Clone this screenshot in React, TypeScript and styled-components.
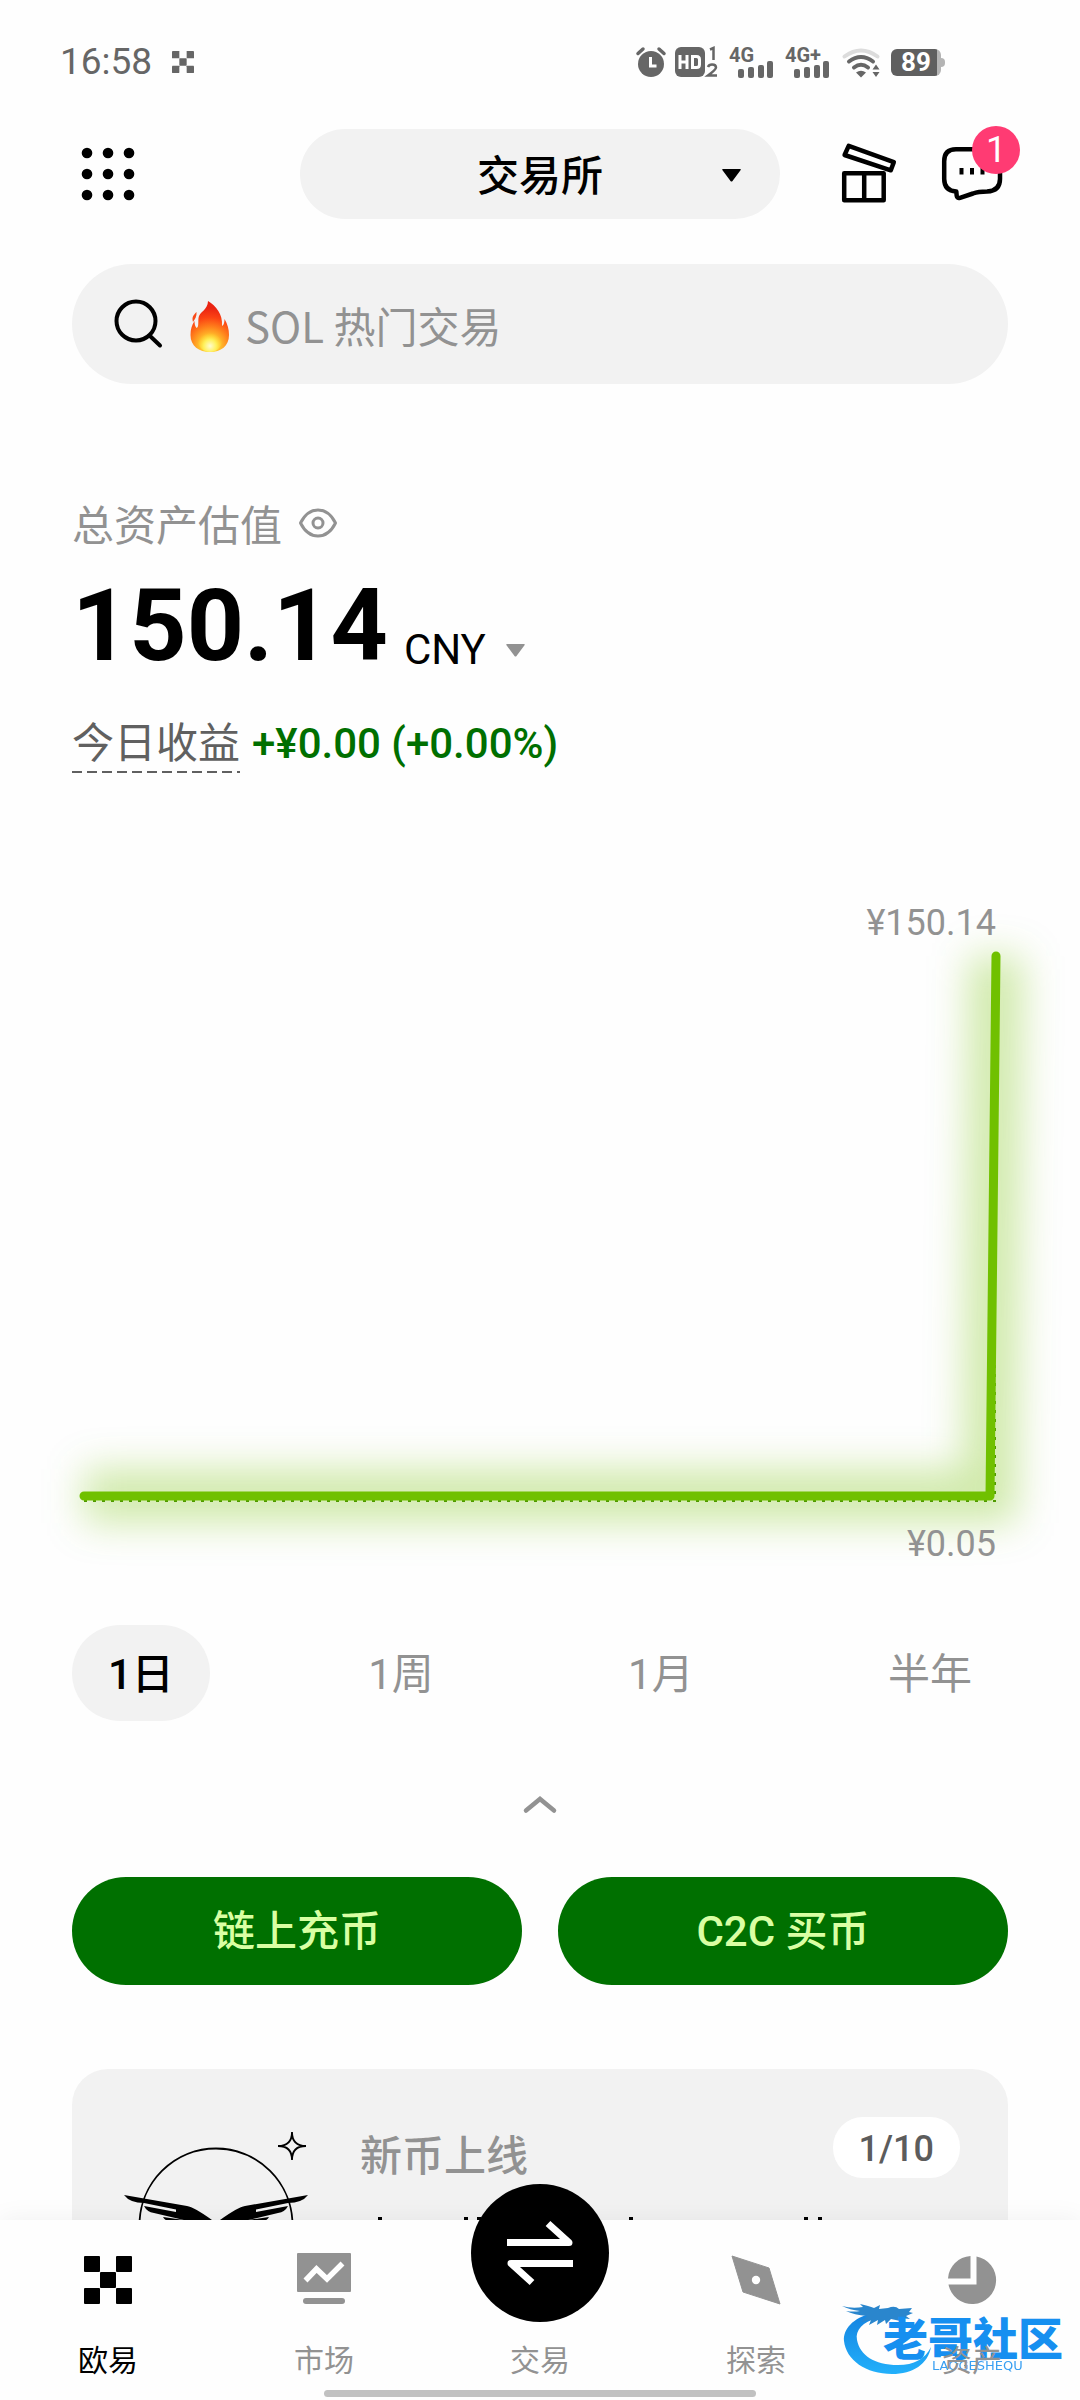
import React, { useState } from "react";
import styled, { createGlobalStyle } from "styled-components";

const numeric = `Roboto, "Noto Sans CJK SC", sans-serif`;

const GlobalStyle = createGlobalStyle`
  *, *::before, *::after { box-sizing: border-box; }
  html, body { margin: 0; background: #fefefe; }
  body, button, input, select {
    font-family: "Noto Sans CJK SC", "Noto Sans", sans-serif;
    color: #000;
  }
  button, input, select { border: 0; padding: 0; margin: 0; background: none; font-size: 42px; }
  button { cursor: pointer; }
  svg { display: block; flex: none; overflow: visible; }
`;

const Screen = styled.div`
  height: 100vh;
  display: flex;
  flex-direction: column;
  overflow: hidden;
  background: #fefefe;
`;

/* ---------- status bar ---------- */

const StatusBar = styled.div`
  display: flex;
  align-items: center;
  justify-content: space-between;
  padding: 38px 135px 43px 60px;
  color: #666;
`;

const StatusGroup = styled.div`
  display: flex;
  align-items: center;
  gap: ${(p: { $gap: number }) => p.$gap}px;
`;

const Clock = styled.time`
  font: 400 37px/48px Roboto, sans-serif;
`;

const Battery = styled.span`
  display: block;
  width: 50px;
  height: 27px;
  margin-right: 4px;
  border-radius: 6px;
  background: linear-gradient(to right, #5f5f5f 46px, #b4b4b4 46px);
  color: #fff;
  font: 700 26px/27px Roboto, sans-serif;
  text-align: center;
  position: relative;
  &::after {
    content: "";
    position: absolute;
    left: 50px;
    top: 9px;
    width: 4px;
    height: 9px;
    border-radius: 0 4px 4px 0;
    background: #b4b4b4;
  }
`;

const CheckerMark = ({ size, color }: { size: number; color: string }) => (
  <svg width={size} height={size} viewBox="0 0 48 48" fill={color} aria-hidden="true">
    <rect width="16" height="16" rx="1" />
    <rect x="32" width="16" height="16" rx="1" />
    <rect x="16" y="16" width="16" height="16" rx="1" />
    <rect y="32" width="16" height="16" rx="1" />
    <rect x="32" y="32" width="16" height="16" rx="1" />
  </svg>
);

const AlarmIcon = () => (
  <svg width="27" height="30" viewBox="0 0 27 30" aria-hidden="true">
    <circle cx="15" cy="17" r="13" fill="#666" />
    <path d="M14.500 10v9h6" fill="none" stroke="#fff" strokeWidth="3" />
    <path d="M2 6.500l5-4.500M28 6.500l-5-4.500" stroke="#666" strokeWidth="3.500" strokeLinecap="round" />
  </svg>
);

const HdIcon = () => (
  <svg width="42" height="30" viewBox="0 0 42 30" aria-hidden="true">
    <rect width="30" height="30" rx="6" fill="#666" />
    <path d="M5 8v14M12 8v14M5 15h7" stroke="#fff" strokeWidth="3" fill="none" />
    <path d="M17.500 9.500h4q3 0 3 3v5q0 3-3 3h-4z" stroke="#fff" strokeWidth="3" fill="none" />
    <path d="M35 2.500l3.500-1.500v12M33 20q1-2.500 4-2.500 4 0 4 3 0 2-8 8h9" fill="none" stroke="#666" strokeWidth="2.500" />
  </svg>
);

const SignalIcon = ({ label }: { label: string }) => (
  <svg width="44" height="30" viewBox="0 0 44 30" fill="#666" role="img" aria-label={label}>
    <text x="0" y="15" fontFamily="Roboto, sans-serif" fontWeight="700" fontSize="20">
      {label}
    </text>
    <rect x="9" y="22" width="6" height="9" rx="2" />
    <rect x="19" y="20" width="6" height="11" rx="2" />
    <rect x="29" y="18" width="6" height="13" rx="2" />
    <rect x="38" y="14" width="6" height="17" rx="2" />
  </svg>
);

const WifiIcon = () => (
  <svg width="38" height="30" viewBox="-2 0 38 30" fill="none" strokeLinecap="round" aria-hidden="true">
    <path d="M1.500 9.500q16.500-12 33 0" stroke="#dcdcdc" strokeWidth="4" />
    <path d="M6 14.500q12-9 24 0" stroke="#666" strokeWidth="4" />
    <path d="M11 20.500q7-5.500 14 0" stroke="#666" strokeWidth="4" />
    <path d="M13 25.500q5-3.500 10 0l-5 5z" fill="#666" />
    <path d="M29.500 22.500l3.500-5 3.500 5zM29.500 25l3.500 5 3.500-5z" fill="#666" />
  </svg>
);

/* ---------- header ---------- */

const Header = styled.header`
  display: grid;
  grid-template-columns: 1fr minmax(0, 480px) 1fr;
  align-items: center;
  padding: 0 72px;
`;

const IconButton = styled.button`
  position: relative;
  width: 72px;
  height: 72px;
`;

const HeaderActions = styled.div`
  display: flex;
  justify-content: flex-end;
  gap: 30px;
`;

const Badge = styled.span`
  position: absolute;
  top: -12px;
  right: -12px;
  width: 48px;
  height: 48px;
  border-radius: 50%;
  background: #ff3b73;
  color: #fff;
  font: 400 36px/48px ${numeric};
  text-align: center;
`;

const ModePicker = styled.label`
  position: relative;
  display: block;
  svg {
    position: absolute;
    right: 39px;
    top: 40px;
    pointer-events: none;
  }
`;

const ModeSelect = styled.select`
  appearance: none;
  width: 100%;
  height: 90px;
  padding-bottom: 4px;
  border-radius: 45px;
  background: #f2f2f2;
  font-weight: 500;
  text-align-last: center;
`;

/* ---------- scrolling content ---------- */

const Content = styled.main`
  flex: 1;
  min-height: 0;
  overflow: hidden auto;
  scrollbar-width: none;
  padding: 45px 72px 0;
`;

const SearchBar = styled.label`
  display: flex;
  align-items: center;
  height: 120px;
  padding: 0 42px;
  gap: 26px;
  border-radius: 60px;
  background: #f2f2f2;
`;

const SearchField = styled.span`
  flex: 1;
  display: flex;
  align-items: center;
  gap: 15px;
`;

const SearchInput = styled.input`
  flex: 1;
  min-width: 0;
  height: 72px;
  outline: 0;
  &::placeholder { color: #929292; opacity: 1; }
`;

const Overview = styled.section`
  padding-top: 109px;
`;

const CaptionRow = styled.div`
  display: flex;
  align-items: center;
  gap: 16px;
  color: #929292;
  font-size: 42px;
  line-height: 60px;
`;

const PlainButton = styled.button`
  display: block;
`;

const BalanceRow = styled.div`
  display: flex;
  align-items: flex-end;
  gap: 16px;
  margin-top: 23px;
`;

const Balance = styled.strong`
  font: 700 100px/100px ${numeric};
`;

const CurrencyPicker = styled.label`
  display: flex;
  align-items: center;
  gap: 20px;
`;

const CurrencySelect = styled.select`
  appearance: none;
  height: 52px;
  font: 400 42px/52px ${numeric};
`;

const GainRow = styled.div`
  display: flex;
  align-items: baseline;
  gap: 12px;
  margin-top: 34px;
  font-size: 42px;
  line-height: 60px;
`;

const GainLabel = styled.span`
  color: #606060;
  padding-bottom: 3px;
  background: repeating-linear-gradient(to right, #606060 0 10px, transparent 10px 15px) bottom / 100% 2px no-repeat;
`;

const GainValue = styled.span`
  color: #006f00;
  font-family: ${numeric};
  font-weight: 500;
`;

const Chart = styled.figure`
  margin: 128px 0 0;
  svg { width: 100%; height: auto; }
`;

const ChartLabel = styled.div`
  position: relative;
  z-index: 1;
  padding-right: 12px;
  text-align: right;
  color: #929292;
  font: 400 36px/42px ${numeric};
`;

const Ranges = styled.div`
  display: flex;
  justify-content: space-between;
  margin-top: 60px;
`;

const RangeTab = styled.button<{ $active: boolean }>`
  height: 96px;
  padding: 4px 36px 0;
  border-radius: 48px;
  background: ${(p) => (p.$active ? "#f2f2f2" : "transparent")};
  color: ${(p) => (p.$active ? "#000" : "#929292")};
  font: ${(p) => (p.$active ? 500 : 400)} 42px/60px ${numeric};
`;

const CollapseButton = styled.button`
  display: flex;
  align-items: center;
  justify-content: center;
  width: 96px;
  height: 60px;
  margin: 53px auto 43px;
`;

const Actions = styled.div`
  display: grid;
  grid-template-columns: 1fr 1fr;
  gap: 36px;
`;

const ActionButton = styled.button`
  height: 108px;
  padding-top: 2px;
  border-radius: 54px;
  background: #007000;
  color: #d9ffa3;
  font: 500 42px/60px ${numeric};
`;

const Card = styled.article`
  display: flex;
  align-items: flex-start;
  gap: 36px;
  margin-top: 84px;
  padding: 48px 48px 48px 36px;
  border-radius: 36px;
  background: #f2f2f2;
`;

const CardBody = styled.div`
  flex: 1;
  min-width: 0;
`;

const CardTitle = styled.h2`
  margin: 0;
  color: #929292;
  font-size: 42px;
  line-height: 72px;
  font-weight: 500;
`;

const Counter = styled.span`
  padding: 3px 26px 0;
  border-radius: 30px;
  background: #fff;
  color: #5c5c5c;
  font: 500 36px/58px ${numeric};
`;

/* ---------- bottom navigation ---------- */

const BottomBar = styled.nav`
  position: relative;
  z-index: 2;
  background: #fefefe;
  box-shadow: 0 -2px 24px rgba(0, 0, 0, 0.05);
`;

const NavList = styled.div`
  position: relative;
  z-index: 1;
  display: grid;
  grid-template-columns: repeat(5, 1fr);
  padding-top: 30px;
`;

const NavItem = styled.a<{ $active?: boolean }>`
  display: flex;
  flex-direction: column;
  align-items: center;
  gap: 27px;
  color: ${(p) => (p.$active ? "#000" : "#929292")};
  font-size: 30px;
  line-height: 42px;
  text-decoration: none;
`;

const TradeDisc = styled.span`
  width: 138px;
  height: 138px;
  margin: -66px 0 -12px;
  border-radius: 50%;
  background: #000;
`;

const HomeIndicator = styled.div`
  width: 40%;
  height: 7px;
  margin: 11px auto 0;
  border-radius: 4px;
  background: #c1c1c1;
`;

const NavFooter = styled.div`
  padding-bottom: 3px;
`;

const Watermark = styled.div`
  position: absolute;
  right: 16px;
  bottom: 22px;
  width: 222px;
  height: 80px;
  pointer-events: none;
`;

const GridIcon = () => (
  <svg width="72" height="72" viewBox="0 0 72 72" aria-hidden="true">
    {[15, 36, 57].map((y) => [15, 36, 57].map((x) => <circle key={`${x}-${y}`} cx={x} cy={y} r="5.300" />))}
  </svg>
);

const GiftIcon = () => (
  <svg width="72" height="72" viewBox="0 0 72 72" fill="none" stroke="#000" strokeWidth="4.500" strokeLinejoin="round" aria-hidden="true">
    <path d="M14.700 7.800L59.800 24.200 56.800 32.300 10.600 17z" />
    <path d="M10.200 35.200h39.500v27H10.200zM30.200 35.200v27" />
  </svg>
);

const ChatIcon = () => (
  <svg width="72" height="72" viewBox="0 0 72 72" fill="none" stroke="#000" strokeWidth="4.500" strokeLinejoin="round" aria-hidden="true">
    <path d="M20 11.200h32q12 0 12 12V41q0 12-13 12.500c-7 0-10 .5-14 2l-13 4.300q-3 .8-3.300-2l-.4-4.300C12 53 8.200 49 8.200 41V23.200q0-12 11.800-12z" />
    <path d="M25.500 30v6.500M36 30v6.500M46.500 30v6.500" strokeWidth="4" />
  </svg>
);

const CaretIcon = ({ color }: { color: string }) => (
  <svg width="19" height="13" viewBox="0 0 19 13" fill={color} aria-hidden="true">
    <path d="M1 0h17q1.500 0 .5 1.200L10.500 12q-1 1-2 0L.5 1.200Q-.5 0 1 0z" />
  </svg>
);

const SearchIcon = () => (
  <svg width="50" height="50" viewBox="0 0 50 50" fill="none" stroke="#000" strokeWidth="4" strokeLinecap="round" aria-hidden="true">
    <circle cx="22" cy="22" r="19.500" />
    <path d="M35.500 36.500l10.500 10" />
  </svg>
);

const FireIcon = () => (
  <svg width="40" height="54" viewBox="0 -4 40 54" aria-hidden="true">
    <defs>
      <radialGradient id="flame" gradientUnits="userSpaceOnUse" cx="20" cy="45" r="38">
        <stop offset="0" stopColor="#fff04a" />
        <stop offset="0.300" stopColor="#ffb82a" />
        <stop offset="0.500" stopColor="#ff821c" />
        <stop offset="0.750" stopColor="#fb4313" />
        <stop offset="1" stopColor="#ea2412" />
      </radialGradient>
      <radialGradient id="core" gradientUnits="userSpaceOnUse" cx="20" cy="45" r="13">
        <stop offset="0" stopColor="#fffbd0" />
        <stop offset="0.500" stopColor="#fff05a" />
        <stop offset="1" stopColor="#ffd52e" stopOpacity="0" />
      </radialGradient>
    </defs>
    <path d="M18 0c8 5 15 13 14 25 2-1 2.500-4 2.500-7 3 5 4.500 10 4.500 16C39 45 31 51 20 51S.5 45 .5 34C.5 28 2 24 4.500 20c0 3 .5 5 2 7C9 26 8 22 8.500 17 9 11 18 9 18 0z" fill="url(#flame)" />
    <path d="M6.500 11c-3 3-5 5-3.500 10 2-3 4-6 3.500-10z" fill="#f94a18" />
    <ellipse cx="20" cy="40" rx="12" ry="11" fill="url(#core)" />
  </svg>
);

const EyeIcon = () => (
  <svg width="40" height="32" viewBox="0 0 40 32" fill="none" stroke="#929292" strokeWidth="3" aria-hidden="true">
    <path d="M2.500 16Q9 3 20 3t17.500 13Q31 29 20 29T2.500 16z" strokeLinejoin="round" />
    <circle cx="20" cy="16" r="5" />
  </svg>
);

const BalanceLine = () => (
  <svg viewBox="0 4 936 579" fill="none" role="img" aria-label="资产走势">
    <defs>
      <filter id="glow" filterUnits="userSpaceOnUse" x="-72" y="-100" width="1080" height="780">
        <feGaussianBlur stdDeviation="19" />
      </filter>
    </defs>
    <path d="M12 556H918L924 16" stroke="#70c000" strokeWidth="54" strokeOpacity="0.330" filter="url(#glow)" />
    <path d="M12 561H923V16" stroke="#4f9a00" strokeWidth="2" strokeDasharray="3 6" />
    <path d="M12 556H918L924 16" stroke="#70c000" strokeWidth="9" strokeLinecap="round" strokeLinejoin="round" />
  </svg>
);

const ListingArt = () => (
  <svg width="216" height="216" viewBox="0 0 216 216" aria-hidden="true">
    <g fill="none" stroke="#000" strokeWidth="1.800">
      <circle cx="108" cy="108" r="76.500" />
      <path d="M184 15q0 14-14 14 14 0 14 14 0-14 14-14-14 0-14-14z" />
    </g>
    {["", "translate(216 0) scale(-1 1)"].map((mirror) => (
      <g key={mirror} transform={mirror}>
        <path d="M16 78L79 89Q86 90 104 103L80 104 46 96Q39 95 36 89L68 95V92.500L36 86Q22 86 16 78z" />
        <path d="M55 100l28 4H62q-5 0-7-4z" />
      </g>
    ))}
  </svg>
);

/* Tops of the headline that sits under the bottom bar */
const HeadlinePeek = () => (
  <svg width="480" height="72" viewBox="0 0 480 72" stroke="#000" strokeWidth="4" aria-hidden="true">
    <path d="M20 28v8M106 28v8M119 28v8M271 28v8M446 28v8M460 28v8" />
  </svg>
);

const MarketIcon = () => (
  <svg width="60" height="60" viewBox="0 0 60 60" aria-hidden="true">
    <rect x="3" y="3" width="54" height="39" rx="1" fill="#929292" />
    <path d="M11.500 30.500L22.500 19 33 29 48.500 13.500" fill="none" stroke="#fff" strokeWidth="5.500" />
    <rect x="9" y="48" width="42" height="6" rx="3" fill="#929292" />
  </svg>
);

const TradeIcon = () => (
  <svg width="138" height="138" viewBox="0 0 138 138" fill="none" stroke="#fff" strokeWidth="7" strokeLinejoin="round" aria-hidden="true">
    <path d="M36 58.500h62L77 39.500M102 79.500H40l21 19" />
  </svg>
);

const ExploreIcon = () => (
  <svg width="60" height="60" viewBox="0 0 60 60" aria-hidden="true">
    <path d="M6 6l37 12 11 36-37-12z" fill="#929292" stroke="#929292" strokeLinejoin="round" />
    <circle cx="30" cy="30" r="4.200" fill="#fff" />
  </svg>
);

const AssetsIcon = () => (
  <svg width="60" height="60" viewBox="0 0 60 60" fill="#929292" aria-hidden="true">
    <path d="M28.500 6v22.500H6A24 24 0 0 1 28.500 6z" />
    <path d="M34.500 6.500A24 24 0 1 1 6.500 34.500h28z" />
  </svg>
);

const DragonLogo = () => (
  <svg width="222" height="80" viewBox="0 0 222 80" role="img" aria-label="老哥社区">
    <defs>
      <linearGradient id="dragon" x1="0" y1="0" x2="0" y2="1">
        <stop offset="0" stopColor="#1583e0" />
        <stop offset="1" stopColor="#22b0fb" />
      </linearGradient>
    </defs>
    <path d="M30 15C11 20 1 31 2 43c2 19 22 33 48 33 21 0 36-10 39-27-6 12-17 18-33 18-24 0-38-10-41-25-2-10 6-18 20-22z" fill="url(#dragon)" />
    <path d="M0 8q10 3 21 1l-3-3q9 2 14 4l6-3-1 4 9-1q7-3 11 1l13-1-3 4 4 1-7 3 4 3-10-1 5 4-14-3-5 5-1-4-8 5 1-5-9 5 2-5-10 2 6-6Q12 17 4 13q8 1 14 0Q8 12 0 8z" fill="#2a86cd" />
    <g fill="#168ff0" fontFamily="'Noto Sans CJK SC', sans-serif">
      <text x="41" y="58" fontSize="45" fontWeight="900">老哥社区</text>
      <text x="90" y="72" fontSize="13" fontFamily="'DejaVu Sans', sans-serif" opacity="0.850">LAOGESHEQU</text>
    </g>
  </svg>
);

const ranges = ["1日", "1周", "1月", "半年"];

export default function App() {
  const [range, setRange] = useState(ranges[0]);

  return (
    <Screen>
      <GlobalStyle />
      <StatusBar>
        <StatusGroup $gap={20}>
          <Clock>16:58</Clock>
          <CheckerMark size={22} color="#666" />
        </StatusGroup>
        <StatusGroup $gap={12}>
          <AlarmIcon />
          <HdIcon />
          <SignalIcon label="4G" />
          <SignalIcon label="4G+" />
          <WifiIcon />
          <Battery>89</Battery>
        </StatusGroup>
      </StatusBar>

      <Header>
        <IconButton aria-label="菜单">
          <GridIcon />
        </IconButton>
        <ModePicker>
          <ModeSelect aria-label="模式" defaultValue="交易所">
            <option>交易所</option>
          </ModeSelect>
          <CaretIcon color="#000" />
        </ModePicker>
        <HeaderActions>
          <IconButton aria-label="奖励">
            <GiftIcon />
          </IconButton>
          <IconButton aria-label="消息">
            <ChatIcon />
            <Badge>1</Badge>
          </IconButton>
        </HeaderActions>
      </Header>

      <Content>
        <SearchBar>
          <SearchIcon />
          <SearchField>
            <FireIcon />
            <SearchInput type="text" aria-label="搜索" placeholder="SOL 热门交易" />
          </SearchField>
        </SearchBar>

        <Overview>
          <CaptionRow>
            <span>总资产估值</span>
            <PlainButton aria-label="隐藏金额">
              <EyeIcon />
            </PlainButton>
          </CaptionRow>
          <BalanceRow>
            <Balance>150.14</Balance>
            <CurrencyPicker>
              <CurrencySelect aria-label="币种" defaultValue="CNY">
                <option>CNY</option>
              </CurrencySelect>
              <CaretIcon color="#929292" />
            </CurrencyPicker>
          </BalanceRow>
          <GainRow>
            <GainLabel>今日收益</GainLabel>
            <GainValue>+¥0.00 (+0.00%)</GainValue>
          </GainRow>
        </Overview>

        <Chart>
          <ChartLabel>¥150.14</ChartLabel>
          <BalanceLine />
          <ChartLabel>¥0.05</ChartLabel>
        </Chart>

        <Ranges role="tablist">
          {ranges.map((name) => (
            <RangeTab
              key={name}
              role="tab"
              aria-selected={name === range}
              $active={name === range}
              onClick={() => setRange(name)}
            >
              {name}
            </RangeTab>
          ))}
        </Ranges>

        <CollapseButton aria-label="收起">
          <svg width="34" height="18" viewBox="0 0 34 18" fill="none" stroke="#929292" strokeWidth="4.500" strokeLinecap="round">
            <path d="M3 15.500L17 4l14 11.500" />
          </svg>
        </CollapseButton>

        <Actions>
          <ActionButton>链上充币</ActionButton>
          <ActionButton>C2C 买币</ActionButton>
        </Actions>

        <Card>
          <ListingArt />
          <CardBody>
            <CardTitle>新币上线</CardTitle>
            <HeadlinePeek />
          </CardBody>
          <Counter>1/10</Counter>
        </Card>
      </Content>

      <BottomBar>
        <Watermark>
          <DragonLogo />
        </Watermark>
        <NavList>
          <NavItem href="#home" $active>
            <svg width="60" height="60" viewBox="0 0 60 60" aria-hidden="true">
              <g transform="translate(6 6)">
                <CheckerMark size={48} color="#000" />
              </g>
            </svg>
            欧易
          </NavItem>
          <NavItem href="#market">
            <MarketIcon />
            市场
          </NavItem>
          <NavItem href="#trade">
            <TradeDisc>
              <TradeIcon />
            </TradeDisc>
            交易
          </NavItem>
          <NavItem href="#explore">
            <ExploreIcon />
            探索
          </NavItem>
          <NavItem href="#assets">
            <AssetsIcon />
            资产
          </NavItem>
        </NavList>
        <NavFooter>
          <HomeIndicator />
        </NavFooter>
      </BottomBar>
    </Screen>
  );
}
